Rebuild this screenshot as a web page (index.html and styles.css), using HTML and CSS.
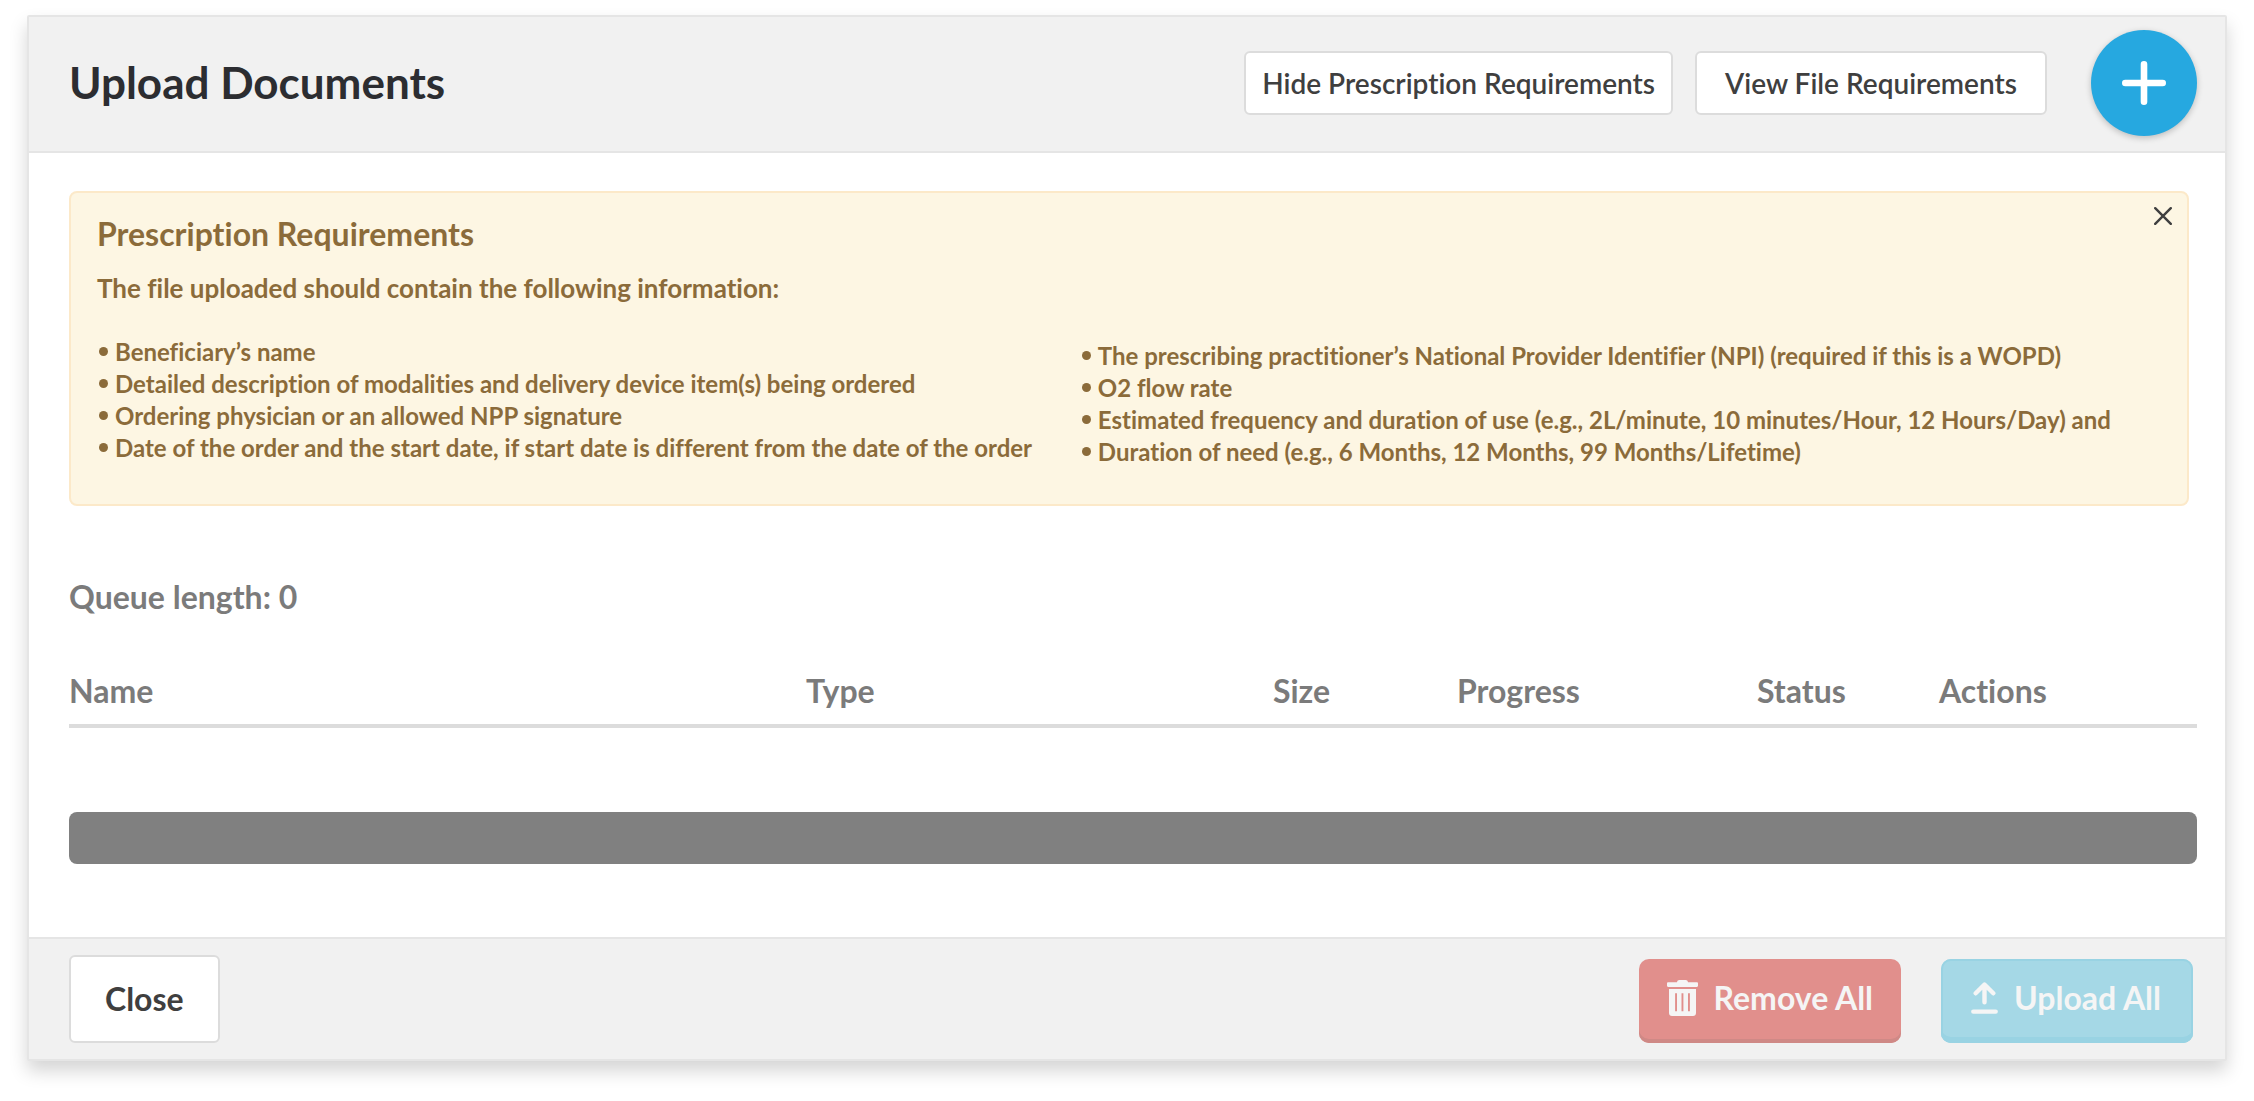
FILE: index.html
```html
<!DOCTYPE html>
<html lang="en">
<head>
  <meta charset="utf-8">
  <meta name="viewport" content="width=device-width, initial-scale=1">
  <title>Upload Documents</title>
  <link rel="stylesheet" href="styles.css">
</head>
<body>
  <main class="dialog">
    <header class="dialog-header">
      <h1 class="dialog-title">Upload Documents</h1>
      <div class="header-actions">
        <button type="button" class="btn btn-outline btn-small">Hide Prescription Requirements</button>
        <button type="button" class="btn btn-outline btn-small">View File Requirements</button>
      </div>
      <button type="button" class="btn-add" aria-label="Add file">
        <svg width="44" height="44" viewBox="0 0 44 44" aria-hidden="true">
          <path d="M22 3.3v37.4M3.3 22h37.4" stroke="currentColor" stroke-width="6.6" stroke-linecap="round"/>
        </svg>
      </button>
    </header>

    <div class="dialog-body">
      <section class="notice">
        <button type="button" class="notice-close" aria-label="Dismiss">
          <svg width="18" height="18" viewBox="0 0 18 18" aria-hidden="true">
            <path d="M1.2 1.2l15.6 15.6M16.8 1.2L1.2 16.8" stroke="currentColor" stroke-width="2.4" stroke-linecap="round"/>
          </svg>
        </button>
        <h2 class="notice-title">Prescription Requirements</h2>
        <p class="notice-intro">The file uploaded should contain the following information:</p>
        <div class="notice-columns">
          <ul class="notice-list">
            <li>Beneficiary’s name</li>
            <li>Detailed description of modalities and delivery device item(s) being ordered</li>
            <li>Ordering physician or an allowed NPP signature</li>
            <li>Date of the order and the start date, if start date is different from the date of the order</li>
          </ul>
          <ul class="notice-list notice-list-end">
            <li>The prescribing practitioner’s National Provider Identifier (NPI) (required if this is a WOPD)</li>
            <li>O2 flow rate</li>
            <li>Estimated frequency and duration of use (e.g., 2L/minute, 10 minutes/Hour, 12 Hours/Day) and</li>
            <li>Duration of need (e.g., 6 Months, 12 Months, 99 Months/Lifetime)</li>
          </ul>
        </div>
      </section>

      <p class="queue-length">Queue length: 0</p>

      <table class="queue">
        <colgroup>
          <col>
          <col class="col-type">
          <col class="col-size">
          <col class="col-progress">
          <col class="col-status">
          <col class="col-actions">
        </colgroup>
        <thead>
          <tr>
            <th scope="col">Name</th>
            <th scope="col">Type</th>
            <th scope="col">Size</th>
            <th scope="col">Progress</th>
            <th scope="col">Status</th>
            <th scope="col">Actions</th>
          </tr>
        </thead>
      </table>

      <div class="queue-bar"></div>
    </div>

    <footer class="dialog-footer">
      <button type="button" class="btn btn-outline btn-close">Close</button>
      <div class="footer-actions">
        <button type="button" class="btn btn-solid btn-remove">
          <svg width="31" height="36" viewBox="0 0 31 36" fill="currentColor" aria-hidden="true">
            <path d="M10 2.300C10.300.800 11 0 12.400 0h6.200c1.400 0 2.100.800 2.400 2.300h8.800c.700 0 1.200.500 1.200 1.200v2.300c0 .700-.500 1.200-1.200 1.200H1.200C.500 7 0 6.500 0 5.800V3.500c0-.700.500-1.200 1.200-1.200z"/>
            <path fill-rule="evenodd" d="M2 9h27v24c0 1.800-1.200 3-3 3H5c-1.800 0-3-1.200-3-3zm6.100 4.300v18h1.900v-18zm6.400 0v18h1.900v-18zm6.500 0v18h1.900v-18z"/>
          </svg>
          Remove All
        </button>
        <button type="button" class="btn btn-solid btn-upload">
          <svg width="27" height="32" viewBox="0 0 27 32" fill="none" stroke="currentColor" stroke-width="4.400" stroke-linecap="round" stroke-linejoin="round" aria-hidden="true">
            <path d="M13.500 20.200V3M4.700 11.300l8.800-8.800 8.800 8.800M2.300 29.600h22.400"/>
          </svg>
          Upload All
        </button>
      </div>
    </footer>
  </main>
</body>
</html>
```
FILE: styles.css
```css
* {
  box-sizing: border-box;
}

body {
  margin: 0;
  padding: 15px 27px 40px;
  background: #fff;
  font-family: Lato, "Liberation Sans", sans-serif;
  font-variant-ligatures: none;
}

h1, h2, p, ul {
  margin: 0;
}

button {
  padding: 0;
  border: 0;
  font-family: inherit;
  font-variant-ligatures: inherit;
  cursor: pointer;
}

svg {
  display: block;
  flex: none;
}

.dialog {
  background: #fff;
  border: 2px solid #e5e5e5;
  border-radius: 2px;
  box-shadow: 0 10px 18px rgba(0, 0, 0, 0.17);
}

/* Header */

.dialog-header {
  display: flex;
  align-items: center;
  padding: 13px 28px 15px 40px;
  background: #f1f1f1;
  border-bottom: 2px solid #e5e5e5;
}

.dialog-title {
  padding-bottom: 2px;
  color: #2c2d31;
  font-size: 44px;
  font-weight: 700;
  line-height: 52px;
}

.header-actions {
  display: flex;
  gap: 22px;
  margin-left: auto;
  margin-right: 44px;
}

.btn {
  display: flex;
  align-items: center;
  justify-content: center;
  font-size: 32px;
  font-weight: 700;
  line-height: 40px;
  white-space: nowrap;
}

.btn-outline {
  background: #fff;
  border: 2px solid #dcdcdc;
  border-radius: 6px;
  color: #3f3f3f;
}

.btn-small {
  min-width: 352px;
  height: 64px;
  padding: 0 16px;
  font-size: 28px;
  font-weight: 600;
}

.btn-add {
  display: flex;
  align-items: center;
  justify-content: center;
  width: 106px;
  height: 106px;
  border-radius: 50%;
  background: #26a8e0;
  box-shadow: 0 2px 6px rgba(0, 0, 0, 0.22);
  color: #fff;
}

/* Body */

.dialog-body {
  padding: 38px 28px 73px 40px;
}

.notice {
  position: relative;
  margin-right: 8px;
  padding: 21px 26px 36px;
  background: #fdf6e3;
  border: 2px solid #fce9c9;
  border-radius: 8px;
  color: #8b6b3a;
}

.notice-close {
  position: absolute;
  top: 8px;
  right: 9px;
  padding: 6px;
  background: transparent;
  color: #3f3f3f;
}

.notice-title {
  font-size: 32px;
  font-weight: 700;
  line-height: 40px;
}

.notice-intro {
  margin-top: 18px;
  font-size: 26px;
  font-weight: 700;
  line-height: 32px;
}

.notice-columns {
  display: grid;
  grid-template-columns: 10fr 11fr;
  margin-top: 32px;
  font-size: 24px;
  font-weight: 700;
  line-height: 32px;
}

.notice-list {
  padding: 0 0 0 2px;
  list-style: none;
}

.notice-list-end {
  padding-top: 4px;
}

.notice-list li {
  display: flex;
  align-items: center;
  gap: 7px;
}

.notice-list li::before {
  content: "";
  flex: none;
  width: 9px;
  height: 9px;
  margin-bottom: 2px;
  border-radius: 50%;
  background: currentColor;
}

.queue-length {
  margin-top: 71px;
  color: #7b7b7b;
  font-size: 32px;
  font-weight: 700;
  line-height: 40px;
}

.queue {
  width: 100%;
  margin-top: 54px;
  border-collapse: separate;
  border-spacing: 0;
  table-layout: fixed;
}

.queue th {
  padding: 0 0 13px;
  border-bottom: 4px solid #dcdcdc;
  color: #7b7b7b;
  font-size: 32px;
  font-weight: 700;
  line-height: 40px;
  text-align: left;
}

.col-type {
  width: 467px;
}

.col-size {
  width: 184px;
}

.col-progress {
  width: 300px;
}

.col-status {
  width: 182px;
}

.col-actions {
  width: 258px;
}

.queue-bar {
  height: 52px;
  margin-top: 84px;
  border-radius: 8px;
  background: #808080;
}

/* Footer */

.dialog-footer {
  display: flex;
  align-items: flex-end;
  justify-content: space-between;
  padding: 16px 32px 16px 40px;
  background: #f1f1f1;
  border-top: 2px solid #e5e5e5;
}

.btn-close {
  height: 88px;
  padding: 0 34px;
}

.footer-actions {
  display: flex;
  gap: 40px;
}

.btn-solid {
  height: 84px;
  padding: 0 28px 6px;
  border-radius: 10px;
  color: #f5f5f5;
}

.btn-remove {
  gap: 16px;
  background: #e18f8c;
  box-shadow: inset 0 -4px 0 #cf8986;
}

.btn-upload {
  gap: 16px;
  padding: 0 32px 6px 30px;
  background: #a5d8e6;
  box-shadow: inset 0 -6px 0 #99d3e3, inset 0 0 0 2px #99d3e3;
}
```
